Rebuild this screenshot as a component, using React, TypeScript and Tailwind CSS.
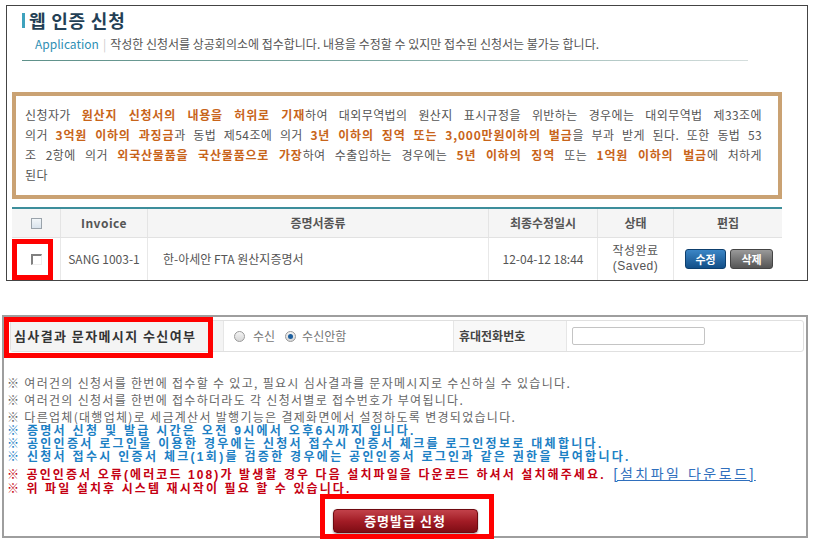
const cols = 'grid grid-cols-[48px_87px_341px_109px_76px_109px]';

function Bold({ children }: { children: React.ReactNode }) {
  return <b className="font-bold tracking-[0.8px] text-[#c8641a]">{children}</b>;
}

function Radio({ checked }: { checked?: boolean }) {
  return (
    <span className="flex h-[11px] w-[11px] items-center justify-center rounded-full border border-[#9a9a9a] bg-linear-to-b from-[#f4f4f4] to-[#d6d6d6]">
      {checked && <span className="h-[5px] w-[5px] rounded-full bg-[#1d5f9e]" />}
    </span>
  );
}

export default function App() {
  return (
    <div className="relative h-[544px] w-[819px] overflow-hidden bg-white font-['Noto_Sans_CJK_KR','Noto_Sans',sans-serif] text-[#555]">
      {/* 웹 인증 신청 */}
      <section className="ml-[6px] mt-[5px] flex h-[276px] w-[802px] flex-col border border-[#444]">
        <div className="flex items-center pl-[15px] pt-[3px]">
          <span className="h-[15px] w-[3px] bg-[#3fa2bd]" />
          <h1 className="ml-[4px] text-[18px] font-bold leading-[22px] tracking-[0.8px] text-[#233f55]">웹 인증 신청</h1>
        </div>
        <p className="mt-[5px] pl-[28px] text-[12px] leading-[16px] text-[#555]">
          <span className="text-[#2f8fb4]">Application</span>
          <span className="mx-[4px] text-[#ccc]">|</span>
          작성한 신청서를 상공회의소에 접수합니다. 내용을 수정할 수 있지만 접수된 신청서는 불가능 합니다.
        </p>
        <div className="ml-[15px] mt-[8px] h-px w-[726px] bg-linear-to-r from-[#5f918a] via-[#7da8a2] to-[#d5dedd]" />

        <div className="ml-[5px] mt-[31px] h-[107px] w-[770px] border-4 border-[#caa273] pb-[10px] pl-[9px] pr-[16px] pt-[9px] text-[12px] leading-[20px] tracking-[0.4px] text-[#555]">
          <div className="text-justify [text-align-last:justify]">
            신청자가 <Bold>원산지 신청서의 내용을 허위로 기재</Bold>하여 대외무역법의 원산지 표시규정을 위반하는 경우에는 대외무역법 제33조에
          </div>
          <div className="text-justify [text-align-last:justify]">
            의거 <Bold>3억원 이하의 과징금</Bold>과 동법 제54조에 의거 <Bold>3년 이하의 징역 또는 3,000만원이하의 벌금</Bold>을 부과 받게 된다. 또한 동법 53
          </div>
          <div className="text-justify [text-align-last:justify]">
            조 2항에 의거 <Bold>외국산물품을 국산물품으로 가장</Bold>하여 수출입하는 경우에는 <Bold>5년 이하의 징역</Bold> 또는 <Bold>1억원 이하의 벌금</Bold>에 처하게
          </div>
          <div>된다</div>
        </div>

        <div className="ml-[5px] mt-[8px] w-[770px] border-t-2 border-[#3d8e9b] text-[12px]">
          <div className={`${cols} h-[29px] border-b border-[#e2e2e2] bg-[#f5f5f5] font-bold text-[#555]`}>
            <div className="flex items-center justify-center">
              <span className="h-[11px] w-[11px] border border-[#9aa3ab] bg-linear-to-b from-[#f2f6f9] to-[#d9e3ec]" />
            </div>
            <div className="flex items-center justify-center border-l border-[#e4e4e4] tracking-[0.5px]">Invoice</div>
            <div className="flex items-center justify-center border-l border-[#e4e4e4]">증명서종류</div>
            <div className="flex items-center justify-center border-l border-[#e4e4e4]">최종수정일시</div>
            <div className="flex items-center justify-center border-l border-[#e4e4e4]">상태</div>
            <div className="flex items-center justify-center border-l border-[#e4e4e4]">편집</div>
          </div>
          <div className={`${cols} h-[42px]`}>
            <div className="flex items-center justify-center">
              <span className="h-[11px] w-[11px] border-l-2 border-t-2 border-b border-r border-l-[#808080] border-t-[#808080] border-b-[#eee] border-r-[#eee]" />
            </div>
            <div className="flex items-center justify-center border-l border-[#e8e8e8]">SANG 1003-1</div>
            <div className="flex items-center border-l border-[#e8e8e8] pl-[15px]">한-아세안 FTA 원산지증명서</div>
            <div className="flex items-center justify-center border-l border-[#e8e8e8]">12-04-12 18:44</div>
            <div className="flex flex-col items-center justify-center border-l border-[#e8e8e8] font-['Liberation_Sans','Noto_Sans_CJK_KR',sans-serif] leading-[15px] tracking-[0.5px]">
              <span>작성완료</span>
              <span>(Saved)</span>
            </div>
            <div className="flex items-center justify-center gap-[4px] border-l border-[#e8e8e8] pl-[2px]">
              <button className="h-[20px] w-[41px] rounded-[3px] border border-[#0d3f6e] bg-linear-to-b from-[#3b86c6] to-[#124f88] text-[11px] font-bold text-white">수정</button>
              <button className="h-[20px] w-[43px] rounded-[3px] border border-[#444] bg-linear-to-b from-[#9a9a9a] to-[#555] text-[11px] font-bold text-white">삭제</button>
            </div>
          </div>
        </div>
      </section>

      {/* 접수 옵션 */}
      <section className="ml-[2px] mt-[34px] flex h-[223px] w-[806px] flex-col border-2 border-[#9e9e9e]">
        <div className="ml-[6px] mt-[3px] flex h-[32px] w-[794px] rounded-[3px] border border-[#e0e0e0] text-[12px]">
          <div className="flex w-[212px] items-center bg-[#f4f4f4] pl-[3px] text-[13px] font-bold tracking-[1.4px] text-[#333]">
            심사결과 문자메시지 수신여부
          </div>
          <div className="flex w-[230px] items-center border-l border-[#e6e6e6] pl-[10px] text-[#777]">
            <Radio />
            <span className="ml-[8px]">수신</span>
            <span className="ml-[10px]"><Radio checked /></span>
            <span className="ml-[6px]">수신안함</span>
          </div>
          <div className="flex w-[113px] items-center border-l border-[#e6e6e6] bg-[#f8f8f8] pl-[5px] font-bold text-[#444]">
            휴대전화번호
          </div>
          <div className="flex flex-1 items-center border-l border-[#e6e6e6] pl-[5px]">
            <input className="h-[18px] w-[133px] rounded-[2px] border border-[#c4c4c4] bg-white" />
          </div>
        </div>

        <div className="mt-[22px] pl-[3px] text-[12px]">
          <div className="leading-[17px] tracking-[1.3px] text-[#666]">
            <p>※ 여러건의 신청서를 한번에 접수할 수 있고, 필요시 심사결과를 문자메시지로 수신하실 수 있습니다.</p>
            <p>※ 여러건의 신청서를 한번에 접수하더라도 각 신청서별로 접수번호가 부여됩니다.</p>
            <p>※ 다른업체(대행업체)로 세금계산서 발행기능은 결제화면에서 설정하도록 변경되었습니다.</p>
          </div>
          <div className="font-['Liberation_Sans','Noto_Sans_CJK_KR',sans-serif] font-bold leading-[13px] tracking-[2.3px] text-[#1c80c4]">
            <p>※ 증명서 신청 및 발급 시간은 오전 9시에서 오후6시까지 입니다.</p>
            <p>※ 공인인증서 로그인을 이용한 경우에는 신청서 접수시 인증서 체크를 로그인정보로 대체합니다.</p>
            <p>※ 신청서 접수시 인증서 체크(1회)를 검증한 경우에는 공인인증서 로그인과 같은 권한을 부여합니다.</p>
          </div>
          <div className="mt-[3px] font-['Liberation_Sans','Noto_Sans_CJK_KR',sans-serif] font-bold leading-[14px] tracking-[2.1px] text-[#c40012]">
            <p>
              ※ 공인인증서 오류(에러코드 108)가 발생할 경우 다음 설치파일을 다운로드 하셔서 설치해주세요.
              <a className="ml-[8px] text-[14px] font-normal tracking-[2.5px] text-[#2f6fbd] underline">[설치파일 다운로드]</a>
            </p>
            <p>※ 위 파일 설치후 시스템 재시작이 필요 할 수 있습니다.</p>
          </div>
        </div>

        <div className="mt-[13px] flex justify-center">
          <button className="h-[24px] w-[145px] rounded-[4px] border border-[#6e0a10] bg-linear-to-b from-[#c2414a] via-[#a31c26] to-[#7f0c14] text-[13px] font-bold tracking-[1px] text-white shadow-[0_1px_2px_rgba(0,0,0,0.4)]">
            증명발급 신청
          </button>
        </div>
      </section>

      {/* 강조 표시 */}
      <div className="absolute left-[12px] top-[239px] h-[41px] w-[41px] border-[5px] border-[#ff0000]" />
      <div className="absolute left-[4px] top-[317px] h-[41px] w-[209px] border-[5px] border-[#ff0000]" />
      <div className="absolute left-[320px] top-[494px] h-[45px] w-[174px] border-[5px] border-[#ff0000]" />
    </div>
  );
}
